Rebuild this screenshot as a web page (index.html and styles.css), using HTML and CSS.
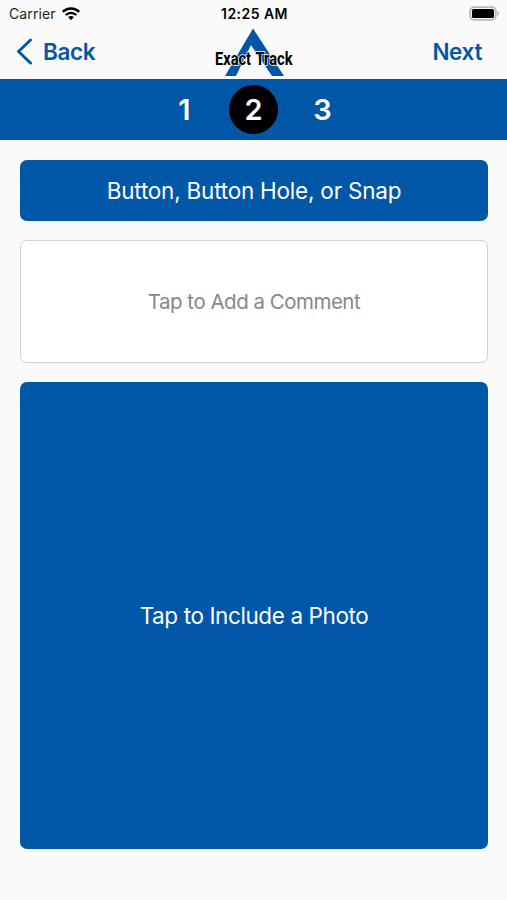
FILE: index.html
```html
<!DOCTYPE html>
<html lang="en">
<head>
  <meta charset="UTF-8">
  <meta name="viewport" content="width=device-width, initial-scale=1">
  <title>Exact Track</title>
  <link rel="stylesheet" href="styles.css">
</head>
<body>
  <div class="app">
    <div class="status-bar">
      <div class="carrier">
        <span>Carrier</span>
        <svg class="wifi" width="18" height="14" viewBox="0 0 18 14" fill="none" stroke="#000" stroke-width="2.3">
          <path d="M.8 4.8C5.4.4 12.6.4 17.2 4.8"/>
          <path d="M3.8 8C6.7 5.1 11.3 5.1 14.2 8"/>
          <path d="M6.1 10.1Q9 7.8 11.9 10.1L9 13.2Z" fill="#000" stroke="none"/>
        </svg>
      </div>
      <span class="time">12:25 AM</span>
      <svg class="battery" width="31" height="16" viewBox="0 0 31 16">
        <rect x="1.2" y="1.2" width="25.6" height="12.6" rx="3.8" fill="#fafafa" stroke="#b8b8b8" stroke-width="1.8"/>
        <rect x="3" y="3" width="22" height="9" rx="1.5" fill="#000"/>
        <path d="M28.3 5v5c2.3-1 2.3-4 0-5z" fill="#b8b8b8"/>
      </svg>
    </div>

    <header class="nav">
      <a class="nav-link" href="#">
        <svg class="chevron" width="17" height="28" viewBox="0 0 17 28" fill="none" stroke="#0057a8" stroke-width="3" stroke-linecap="round" stroke-linejoin="round">
          <path d="M14.5 3L2.5 14.5L14.5 26"/>
        </svg>
        <span>Back</span>
      </a>
      <svg class="logo" width="90" height="52" viewBox="0 0 90 52">
        <path d="M44 1.5L75 49H63L42 18L27 49H16Z" fill="#0057a8"/>
        <text class="logo-text" x="6" y="38" textLength="36" lengthAdjust="spacingAndGlyphs">Exact</text>
        <text class="logo-text" x="46.500" y="38" textLength="37" lengthAdjust="spacingAndGlyphs">Track</text>
      </svg>
      <a class="nav-link next" href="#">Next</a>
    </header>

    <div class="steps">
      <span class="step">1</span>
      <span class="step active">2</span>
      <span class="step">3</span>
    </div>

    <main class="content">
      <button class="btn">Button, Button Hole, or Snap</button>
      <button class="btn comment">Tap to Add a Comment</button>
      <button class="btn photo">Tap to Include a Photo</button>
    </main>
  </div>
</body>
</html>
```
FILE: styles.css
```css
body {
  margin: 0;
  font-family: Inter, sans-serif;
  background: #fafafa;
}

.app {
  height: 900px;
  overflow: hidden;
}

.status-bar {
  display: grid;
  grid-template-columns: 1fr auto 1fr;
  align-items: center;
  height: 27px;
  padding: 0 7px 0 9px;
  box-sizing: border-box;
  font-size: 14px;
  color: #222;
}

.carrier {
  display: flex;
  align-items: center;
  gap: 6px;
  letter-spacing: 0.1px;
}

.time {
  font-weight: 600;
  letter-spacing: 0.45px;
  color: #000;
}

.battery {
  justify-self: end;
}

.nav {
  display: grid;
  grid-template-columns: 1fr auto 1fr;
  align-items: center;
  height: 52px;
  padding: 0 16px;
  box-sizing: border-box;
}

.nav-link {
  display: flex;
  align-items: center;
  gap: 10px;
  padding-bottom: 4px;
  font-size: 22.5px;
  font-weight: 600;
  letter-spacing: -0.35px;
  color: #0057a8;
  text-decoration: none;
}

.next {
  justify-self: end;
  margin-right: 9px;
}

.logo {
  overflow: visible;
}

.logo-text {
  font-family: Roboto, sans-serif;
  font-size: 18px;
  font-weight: 700;
  fill: #000;
  stroke: #fafafa;
  stroke-width: 1.5px;
  paint-order: stroke;
}

.steps {
  display: flex;
  justify-content: center;
  align-items: center;
  gap: 20px;
  height: 61px;
  background: #0057a8;
}

.step {
  width: 49px;
  height: 49px;
  border-radius: 50%;
  line-height: 49px;
  text-align: center;
  font-size: 29px;
  font-weight: 600;
  color: #fff;
}

.step.active {
  background: #000;
}

.content {
  display: flex;
  flex-direction: column;
  gap: 19px;
  padding: 20px 19px 0 20px;
}

.btn {
  height: 61px;
  padding: 0;
  border: none;
  border-radius: 7px;
  background: #0057a8;
  font-family: inherit;
  font-size: 22.5px;
  letter-spacing: -0.22px;
  color: #fff;
}

.comment {
  height: 123px;
  border: 1px solid #d0d0d0;
  background: #fff;
  font-size: 20.5px;
  letter-spacing: -0.5px;
  color: #888;
}

.photo {
  height: 467px;
  letter-spacing: -0.4px;
}
```
